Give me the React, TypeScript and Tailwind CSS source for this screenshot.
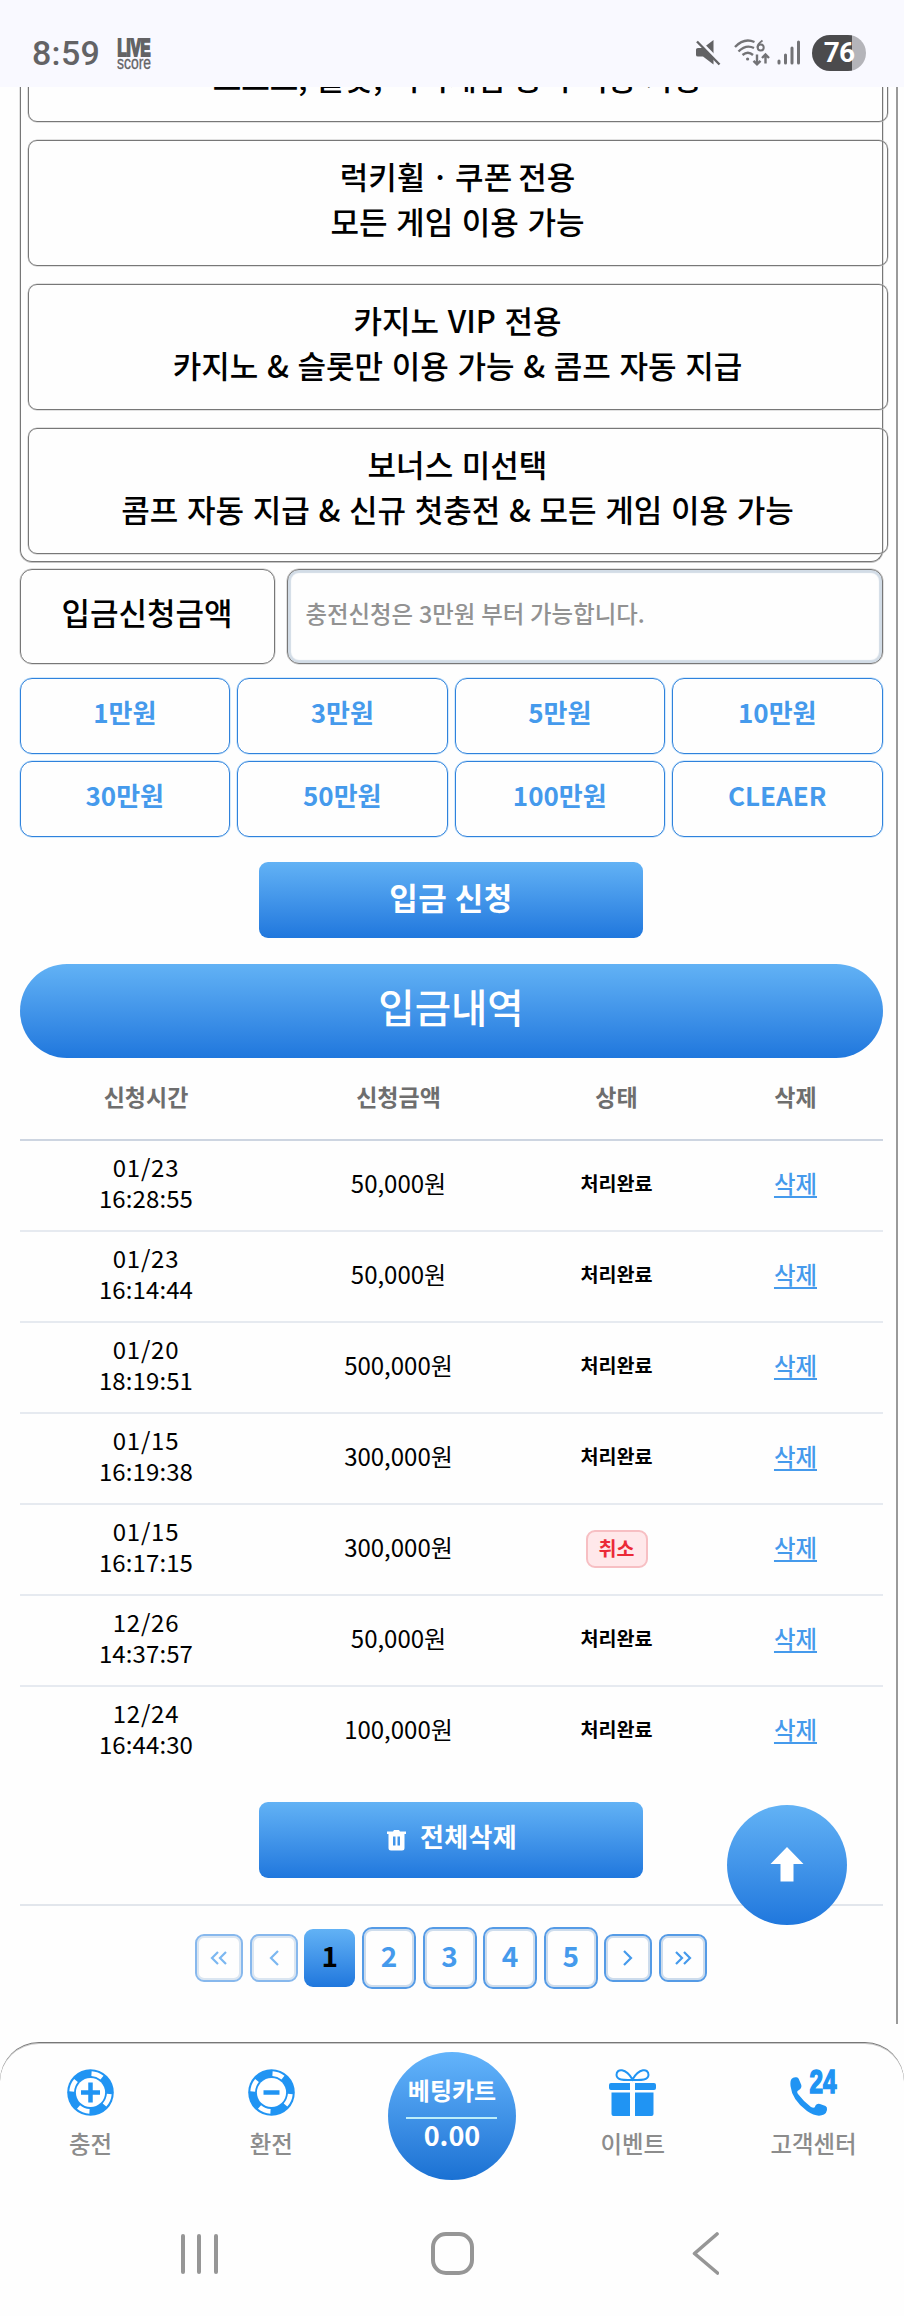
import React from 'react';

interface BonusOption {
  title?: string;
  description: string;
  tight?: boolean;
}

interface DepositRow {
  date: string;
  time: string;
  amount: string;
  canceled?: boolean;
}

const BONUS_OPTIONS: BonusOption[] = [
  { description: '스포츠, 슬롯, 미니게임 등 주이용 가능' },
  { title: '럭키휠 · 쿠폰 전용', description: '모든 게임 이용 가능', tight: true },
  { title: '카지노 VIP 전용', description: '카지노 & 슬롯만 이용 가능 & 콤프 자동 지급' },
  { title: '보너스 미선택', description: '콤프 자동 지급 & 신규 첫충전 & 모든 게임 이용 가능' },
];

const AMOUNTS = ['1만원', '3만원', '5만원', '10만원', '30만원', '50만원', '100만원', 'CLEAER'];

const ROWS: DepositRow[] = [
  { date: '01/23', time: '16:28:55', amount: '50,000원' },
  { date: '01/23', time: '16:14:44', amount: '50,000원' },
  { date: '01/20', time: '18:19:51', amount: '500,000원' },
  { date: '01/15', time: '16:19:38', amount: '300,000원' },
  { date: '01/15', time: '16:17:15', amount: '300,000원', canceled: true },
  { date: '12/26', time: '14:37:57', amount: '50,000원' },
  { date: '12/24', time: '16:44:30', amount: '100,000원' },
];

function StatusBar() {
  return (
    <header className="h-[87px] shrink-0 bg-[#f9f9ff] flex justify-between pl-8 pr-[38px] pt-[35px] text-[#636365]">
      <div className="flex items-start">
        <span className="font-[Roboto] font-medium text-[34px] leading-9 tracking-[0.3px] w-[85px]">8:59</span>
        <svg width="34" height="36" viewBox="0 0 34 36" className="overflow-visible" fill="currentColor">
          <text x="0.5" y="21" fontSize="23" fontWeight="700" stroke="currentColor" strokeWidth="2.2" textLength="33" lengthAdjust="spacingAndGlyphs" fontFamily="Liberation Sans, sans-serif">LIVE</text>
          <text x="0" y="33.5" fontSize="18" textLength="34" lengthAdjust="spacingAndGlyphs" stroke="currentColor" strokeWidth="0.3" fontFamily="Liberation Sans, sans-serif">score</text>
        </svg>
      </div>
      <div className="flex items-start">
        <svg width="26" height="26" viewBox="0 0 26 26" className="mt-[5px]">
          <path d="M1 9.5Q1 8 3 8H8L18.5 0V24.5L8 16.5H3Q1 16.5 1 15Z" fill="#636365" />
          <path d="M3.5 0L26 23" stroke="#f9f9ff" strokeWidth="3" />
          <path d="M2 1.5L24.5 24.5" stroke="#636365" strokeWidth="2.4" />
        </svg>
        <svg width="36" height="28" viewBox="0 0 36 28" className="ml-[13px] mt-1" fill="none" stroke="#737376" strokeWidth="2.4">
          <path d="M1 8Q10 -1.5 20.5 3" />
          <path d="M4.5 12.5Q12 5 20 9" />
          <path d="M8.5 16Q14 11.5 19 16" />
          <circle cx="13.6" cy="20" r="1.6" fill="#737376" stroke="none" />
          <path d="M28.5 1.5Q23.5 5 23.5 8.5" strokeWidth="2" />
          <circle cx="26.7" cy="8.6" r="3" strokeWidth="2" />
          <path d="M23 15.5V25M19.5 21.8L23 25.3L26.5 21.8M31.5 24.5V15.5M28 19L31.5 15.5L35 19" />
        </svg>
        <svg width="24" height="26" viewBox="0 0 24 26" className="ml-[7px] mt-1" stroke="#737376" strokeWidth="3" strokeLinecap="round">
          <path d="M2 22V24M8.5 16V24M15 9V24M21.5 3V24" />
        </svg>
        <div className="ml-[11px] w-[54px] h-9 rounded-full bg-[linear-gradient(90deg,#4b4b4d_0,#4b4b4d_40px,#b4b4b9_40px)] flex items-center justify-center font-[Roboto] font-bold text-[28px] leading-none tracking-[-0.8px] text-white">
          76
        </div>
      </div>
    </header>
  );
}

function BonusCard({ title, description, tight }: BonusOption) {
  return (
    <div className="h-[126px] w-[860px] shrink-0 rounded-[9px] border border-[#777] shadow-[0_0_0_0.5px_#c4c4c4] pt-[12px] text-center text-[31px] leading-[45px] font-medium [word-spacing:1.7px]">
      {title ? <p className={tight ? '[word-spacing:-1px]' : ''}>{title}</p> : <div className="h-[45px]" />}
      <p>{description}</p>
    </div>
  );
}

function DepositForm() {
  return (
    <>
      <div className="flex gap-[12px] mt-[7px] h-[95px]">
        <div className="w-[255px] rounded-xl border border-[#777] shadow-[0_0_0_0.5px_#c4c4c4] pt-[19px] text-center text-[31px] leading-[45px] font-medium">
          입금신청금액
        </div>
        <div className="flex-1 rounded-xl border border-[#777] shadow-[inset_0_0_1px_3px_#d2dce6,0_0_0_0.5px_#c4c4c4] pl-[18px] pt-[25px] text-[23.4px] leading-9 font-medium text-[#929292] [word-spacing:0.6px]">
          충전신청은 3만원 부터 가능합니다.
        </div>
      </div>
      <div className="grid grid-cols-4 gap-x-[7px] gap-y-[7px] mt-[14px]">
        {AMOUNTS.map((label) => (
          <button key={label} className="h-[76px] rounded-xl border border-[#2f82dc] shadow-[0_0_0_0.5px_#a9d6fb] pb-[9px] text-[26px] leading-9 font-bold text-[#459aec]">
            {label}
          </button>
        ))}
      </div>
      <button className="block mx-auto mt-[25px] h-[76px] w-[384px] rounded-[9px] bg-linear-to-b from-[#62b2f5] to-[#1f77dd] pb-[7px] text-[31px] leading-9 font-bold tracking-[0.5px] text-white">
        입금 신청
      </button>
    </>
  );
}

const GRID = 'grid grid-cols-[253px_252px_184px_174px] items-center text-center';

function DepositHistory() {
  return (
    <section>
      <h2 className="mt-[26px] h-[94px] rounded-full bg-linear-to-b from-[#62b2f5] to-[#1f77dd] pt-[14px] text-center text-[39.5px] leading-[56px] font-medium text-white">
        입금내역
      </h2>
      <div className={`${GRID} h-[83px] border-b-2 border-[#cdd5e1] pb-[4px] text-[23px] font-bold text-[#6e6e6e]`}>
        <span>신청시간</span>
        <span>신청금액</span>
        <span>상태</span>
        <span>삭제</span>
      </div>
      {ROWS.map((row) => (
        <div key={row.time} className={`${GRID} h-[91px] border-b-2 border-[#e6eaf0] pb-[6px] text-2xl last:border-transparent`}>
          <p className="-mt-px leading-[31px]">
            <span className="tracking-[0.8px]">{row.date}</span>
            <br />
            <span className="tracking-[0.1px]">{row.time}</span>
          </p>
          <span>{row.amount}</span>
          {row.canceled ? (
            <span className="mx-auto mt-1 h-[38px] w-[62px] rounded-[9px] border-2 border-[#f7bfc3] bg-[#ffe8ea] text-[19.5px] leading-[31px] font-bold text-[#eb2a37]">
              취소
            </span>
          ) : (
            <span className="mt-[2px] text-[19.6px] font-bold">처리완료</span>
          )}
          <a className="mt-[2px] text-[23.4px] font-medium text-[#459aec] underline underline-offset-[3px]">삭제</a>
        </div>
      ))}
    </section>
  );
}

function PageArrow({ d, dim = false }: { d: string; dim?: boolean }) {
  return (
    <button className={`size-12 rounded-[9px] border-2 border-[#559be6] shadow-[inset_0_0_0_2px_#cddcec] flex items-center justify-center ${dim ? 'opacity-70' : ''}`}>
      <svg width="20" height="20" viewBox="0 0 20 20" fill="none" stroke="#459aec" strokeWidth="2.2">
        <path d={d} />
      </svg>
    </button>
  );
}

function Pagination() {
  return (
    <nav className="flex items-center justify-center gap-[6.6px] mt-[21px]">
      <PageArrow dim d="M9 4L3 10L9 16M17 4L11 10L17 16" />
      <PageArrow dim d="M14 3L7 10L14 17" />
      <button className="h-[58px] w-[51px] rounded-[9px] bg-linear-to-b from-[#62b2f5] to-[#1f77dd] pb-[6px] text-[28px] leading-9 font-bold">1</button>
      {[2, 3, 4, 5].map((page) => (
        <button key={page} className="h-[62px] w-[54px] rounded-[10px] border-2 border-[#559be6] shadow-[inset_0_0_0_2px_#cddcec] pb-[6px] text-[28px] leading-9 font-bold text-[#459aec]">
          {page}
        </button>
      ))}
      <PageArrow d="M6 3L13 10L6 17" />
      <PageArrow d="M3 4L9 10L3 16M11 4L17 10L11 16" />
    </nav>
  );
}

function ChipIcon({ minus = false }: { minus?: boolean }) {
  return (
    <svg width="47" height="47" viewBox="0 0 47 47" fill="none">
      <circle cx="23.5" cy="23.5" r="23.3" fill="#2094f3" />
      <circle cx="23.5" cy="23.5" r="14.6" fill="#fff" />
      <g stroke="#fff" strokeWidth="4.8">
        <path d="M24.5 4.7A18.8 18.8 0 0 1 35 8.7" />
        <path d="M42.3 25A18.8 18.8 0 0 1 37.5 36" />
        <path d="M22.5 42.3A18.8 18.8 0 0 1 11.5 38" />
        <path d="M4.7 22.5A18.8 18.8 0 0 1 9 11.5" />
      </g>
      <path d={minus ? 'M15.5 23.5H31.5' : 'M14 23.5H33M23.5 13.5V33.5'} stroke="#2094f3" strokeWidth="4.5" />
    </svg>
  );
}

function GiftIcon() {
  return (
    <svg width="47" height="47" viewBox="0 0 47 47" fill="#2094f3">
      <path d="M23 11C17 11 8 12 7.5 6C7.5 -1 17 -1 23.5 10.5C30 -1 39.5 -1 39.5 6C39 12 30 11 24 11" fill="none" stroke="#2094f3" strokeWidth="2" />
      <path d="M2 14H21V21H2Q0 21 0 19V16Q0 14 2 14ZM26 14H45Q47 14 47 16V19Q47 21 45 21H26Z" />
      <path d="M2.5 23.5H21V47H4.5Q2.5 47 2.5 45ZM26 23.5H44.5V45Q44.5 47 42.5 47H26Z" />
    </svg>
  );
}

function CallIcon() {
  return (
    <svg width="47" height="47" viewBox="0 0 47 47" fill="#2094f3" className="overflow-visible">
      <path d="M1.5 10Q3 8 6 8.3Q8 8 8.8 10L11.3 16Q12 19 9 21Q6 22 8 25Q14 33 21 38Q25 40 25.5 36.5Q27 34 30 35L35.5 37Q37.5 38 37 41Q36.5 44 34 45.5Q27 49 17 42Q2 31 .5 17Q0 12 1.5 10Z" />
      <text x="19.5" y="24" fontSize="33" fontWeight="700" textLength="27" lengthAdjust="spacingAndGlyphs" stroke="#2094f3" strokeWidth="1.6" fontFamily="Liberation Sans, sans-serif">24</text>
    </svg>
  );
}

function NavItem({ icon, label }: { icon: React.ReactNode; label: string }) {
  return (
    <div className="flex-1 flex flex-col items-center pt-[26px] text-[23.4px] leading-8 font-medium text-[#8c8c8c]">
      {icon}
      <span className="mt-[11px]">{label}</span>
    </div>
  );
}

function BottomNav() {
  return (
    <nav className="h-[158px] shrink-0 flex rounded-t-[39px] border-t border-[#777] shadow-[inset_0_1px_0_#c8c8c8]">
      <NavItem icon={<ChipIcon />} label="충전" />
      <NavItem icon={<ChipIcon minus />} label="환전" />
      <div className="flex-1 pt-[9px]">
        <div className="mx-auto size-32 rounded-full bg-linear-to-b from-[#63b4fb] to-[#1a71d3] flex flex-col items-center pt-[20px] text-white font-bold">
          <span className="text-2xl leading-9">베팅카트</span>
          <span className="mt-[9px] h-[2px] w-[91px] bg-[#bdeefa]" />
          <span className="text-[27px] leading-[32px]">0.00</span>
        </div>
      </div>
      <NavItem icon={<GiftIcon />} label="이벤트" />
      <NavItem icon={<CallIcon />} label="고객센터" />
    </nav>
  );
}

function SystemNav() {
  return (
    <div className="flex h-[116px] shrink-0 items-start px-[73px] pt-[32px]">
      <div className="flex-1 flex justify-center gap-[12.5px] pt-[2px]">
        <i className="h-10 w-1 rounded-full bg-[#969696]" />
        <i className="h-10 w-1 rounded-full bg-[#969696]" />
        <i className="h-10 w-1 rounded-full bg-[#969696]" />
      </div>
      <div className="flex-1 flex justify-center">
        <i className="size-[43px] rounded-[15px] border-4 border-[#969696]" />
      </div>
      <div className="flex-1 flex justify-center">
        <svg width="28" height="44" viewBox="0 0 28 44" fill="none" stroke="#969696" strokeWidth="3.6" strokeLinecap="round" strokeLinejoin="round">
          <path d="M26 2L3.5 21.5L26.5 41" />
        </svg>
      </div>
    </div>
  );
}

export default function App() {
  return (
    <div className="relative flex h-[2316px] w-[904px] flex-col bg-[#fefefe] font-['Noto_Sans_CJK_KR',sans-serif] text-black">
      <StatusBar />
      <main className="h-[1937px] w-[898px] shrink-0 border-r-2 border-[#9a9a9a] pl-[19.5px]">
        <div className="w-[863px]">
          <div className="h-[475px] overflow-y-clip rounded-b-xl border border-t-0 border-[#777] shadow-[0_0.5px_0_0.5px_#c4c4c4] flex flex-col justify-end gap-[18px] pl-[7px] pb-[7px]">
            {BONUS_OPTIONS.map((option) => (
              <BonusCard key={option.description} {...option} />
            ))}
          </div>
          <DepositForm />
          <DepositHistory />
          <div className="border-b-2 border-[#e2e6ec] pt-[24px] pb-[26px]">
            <button className="mx-auto flex h-[76px] w-[384px] items-center justify-center gap-[14px] rounded-[9px] bg-linear-to-b from-[#62b2f5] to-[#1f77dd] pb-[8px] pl-[2px] text-[26px] leading-9 font-bold tracking-[0.3px] text-white">
              <svg width="19" height="21" viewBox="0 0 19 21" fill="#fff" className="mt-[9px]">
                <path fillRule="evenodd" d="M0 1.5H6L7 0H12L13 1.5H19V4H17.5V18Q17.5 20.5 15 20.5H4Q1.5 20.5 1.5 18V4H0ZM6 6.5V15.5H8.5V6.5ZM10.5 6.5V15.5H13V6.5Z" />
              </svg>
              전체삭제
            </button>
          </div>
          <Pagination />
        </div>
      </main>
      <div className="h-[18px] shrink-0" />
      <BottomNav />
      <SystemNav />
      <button className="absolute left-[727px] top-[1804.5px] size-[120px] rounded-full bg-linear-to-b from-[#62b2f5] to-[#1f77dd] flex items-center justify-center">
        <svg width="34" height="35" viewBox="0 0 34 35" fill="#fff">
          <path d="M17 0L33.5 17H23.5V34.5H10.5V17H0.5Z" />
        </svg>
      </button>
    </div>
  );
}
